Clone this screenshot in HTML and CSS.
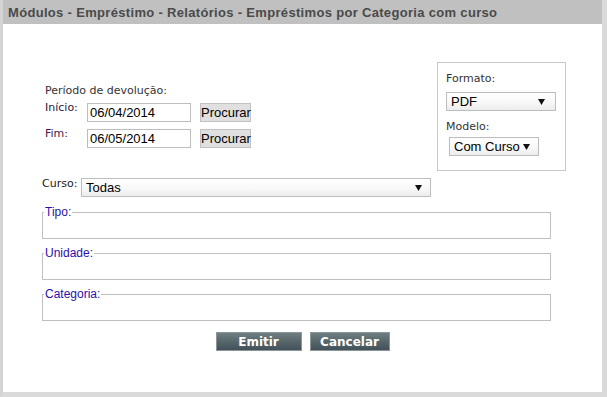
FILE: index.html
```html
<!DOCTYPE html>
<html>
<head lang="pt">
    <meta charset="UTF-8">
    <title>Empréstimos por Categoria com curso</title>
<link rel="stylesheet" href="styles.css">
</head>
<body>
<div class="window">
    <div class="title">Módulos - Empréstimo - Relatórios - Empréstimos por Categoria com curso</div>
    <div class="content">
        <div class="top">
            <div class="period">
                <div class="period_title">Período de devolução:</div>
                <div class="row">
                    <span class="lbl">Início:</span>
                    <input class="date" type="text" value="06/04/2014">
                    <button class="search">Procurar</button>
                </div>
                <div class="row">
                    <span class="lbl lbl_fim">Fim:</span>
                    <input class="date" type="text" value="06/05/2014">
                    <button class="search">Procurar</button>
                </div>
            </div>
            <div class="options">
                <div class="opt_lbl">Formato:</div>
                <div class="sel sel_fmt">
                    <select><option>PDF</option></select>
                    <svg width="7" height="6" viewBox="0 0 7 6"><path d="M0 0H7L3.5 6Z" fill="#111"/></svg>
                </div>
                <div class="opt_lbl">Modelo:</div>
                <div class="sel sel_mod">
                    <select><option>Com Curso</option></select>
                    <svg width="7" height="6" viewBox="0 0 7 6"><path d="M0 0H7L3.5 6Z" fill="#111"/></svg>
                </div>
            </div>
        </div>
        <div class="curso">
            <span class="curso_lbl">Curso:</span>
            <div class="sel sel_curso">
                <select><option>Todas</option></select>
                <svg width="7" height="6" viewBox="0 0 7 6"><path d="M0 0H7L3.5 6Z" fill="#111"/></svg>
            </div>
        </div>
        <fieldset><legend>Tipo:</legend></fieldset>
        <fieldset><legend>Unidade:</legend></fieldset>
        <fieldset><legend>Categoria:</legend></fieldset>
        <div class="actions">
            <button class="act act_emit">Emitir</button>
            <button class="act act_cancel">Cancelar</button>
        </div>
    </div>
</div>
</body>
</html>
```

FILE: styles.css
```css
body {
	margin: 0;
	background: #fff;
}
.window {
	width: 607px;
	height: 397px;
	box-sizing: border-box;
	border-left: 3px solid #d4d4d4;
	border-right: 5px solid #dadada;
	border-bottom: 5px solid #dadada;
	background: #fff;
}
.title {
	height: 24px;
	line-height: 26px;
	padding-left: 5px;
	background: #c0c0c0;
	color: #4a4a4a;
	font-family: "Liberation Sans", Arial, sans-serif;
	font-weight: bold;
	font-size: 13px;
	letter-spacing: 0.32px;
}
.content {
	padding-top: 38px;
	font-family: "DejaVu Sans", Verdana, sans-serif;
	font-size: 11px;
	color: #333;
}
.top {
	display: flex;
}
.period {
	margin-left: 42px;
	padding-top: 22px;
}
.period_title {
	line-height: 13px;
	margin-bottom: 6px;
}
.row {
	display: flex;
	align-items: flex-start;
	margin-bottom: 7px;
}
.lbl {
	width: 42px;
	line-height: 13px;
	margin-top: -2px;
	color: #2a1a3a;
}
.lbl_fim {
	color: #4a1a4a;
}
.date {
	width: 104px;
	height: 19px;
	box-sizing: border-box;
	margin: 0;
	padding: 0 2px;
	border: 1px solid #bdbdbd;
	font-family: "Liberation Sans", Arial, sans-serif;
	font-size: 13px;
	color: #000;
}
.search {
	margin: 0 0 0 9px;
	width: 51px;
	height: 19px;
	padding: 0;
	background: #e0e0e0;
	border: 1px solid #c2c2c2;
	font-family: "Liberation Sans", Arial, sans-serif;
	font-size: 13px;
	color: #000;
}
.options {
	margin-left: auto;
	margin-right: 36px;
	width: 129px;
	height: 109px;
	box-sizing: border-box;
	border: 1px solid #c8c8c8;
	padding: 9px 0 0 8px;
}
.opt_lbl {
	line-height: 13px;
	color: #333;
}
.sel {
	display: flex;
	align-items: center;
	height: 19px;
	box-sizing: border-box;
	border: 1px solid #bdbdbd;
	background: linear-gradient(#ffffff, #f7f7f7 60%, #ececec);
	padding-right: 8px;
}
.sel select {
	flex: 1;
	min-width: 0;
	appearance: none;
	-webkit-appearance: none;
	border: none;
	background: transparent;
	padding: 0 0 0 4px;
	margin: 0;
	outline: none;
	font-family: "Liberation Sans", Arial, sans-serif;
	font-size: 13px;
	color: #000;
}
.sel_fmt {
	width: 110px;
	margin: 7px 0 9px 0;
	padding-right: 10px;
}
.sel_mod {
	width: 90px;
	margin: 4px 0 0 3px;
}
.curso {
	display: flex;
	align-items: flex-start;
	margin: 7px 0 0 39px;
}
.curso_lbl {
	width: 39px;
	line-height: 13px;
	margin-top: -1px;
	color: #222;
}
.sel_curso {
	width: 350px;
}
fieldset {
	width: 509px;
	box-sizing: border-box;
	margin: 8px 0 0 39px;
	padding: 0 0 19px 1px;
	border: 1px solid #c0c0c0;
}
fieldset + fieldset {
	margin-top: 7px;
}
legend {
	padding: 0 1px;
	font-family: "Liberation Sans", Arial, sans-serif;
	font-size: 12px;
	line-height: 14px;
	color: #2d10a8;
}
.actions {
	display: flex;
	justify-content: center;
	gap: 8px;
	margin-top: 11px;
}
.act {
	height: 19px;
	padding: 0;
	border: 1px solid #8b9698;
	background: linear-gradient(#6e7f82, #56666a 50%, #43525a);
	color: #fff;
	font-family: "DejaVu Sans", Verdana, sans-serif;
	font-weight: bold;
	font-size: 12px;
}
.act_emit {
	width: 86px;
}
.act_cancel {
	width: 80px;
}
```
